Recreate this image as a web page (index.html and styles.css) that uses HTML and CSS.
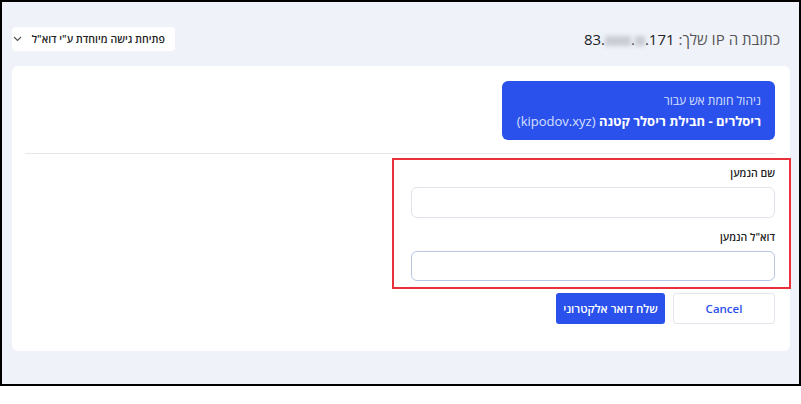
FILE: index.html
```html
<!DOCTYPE html>
<html lang="he" dir="rtl">
<head>
  <meta charset="UTF-8">
  <title>ניהול חומת אש</title>
  <link rel="stylesheet" href="styles.css">
</head>
<body>

  <div class="frame">

    <!-- Top bar: IP + special access dropdown -->
    <div class="topbar">
      <div class="ip-line">
        כתובת ה IP שלך:
        <span class="ip" dir="ltr">83.<span class="masked wide"></span>.<span class="masked"></span>.171</span>
      </div>
      <button class="dropdown">
        פתיחת גישה מיוחדת ע"י דוא"ל
        <svg width="9" height="6" viewBox="0 0 9 6"><path d="M1 1l3.5 3.5L8 1" fill="none" stroke="#555" stroke-width="1.2"/></svg>
      </button>
    </div>

    <div class="card">
      <div class="package-box">
        <div class="package-sub">ניהול חומת אש עבור</div>
        <div class="package-name">ריסלרים - חבילת ריסלר קטנה <span class="domain">(kipodov.xyz)</span></div>
      </div>

      <hr class="divider">

      <form class="send-form">
        <div class="fields">
          <div class="form-group">
            <label>שם הנמען</label>
            <input type="text">
          </div>
          <div class="form-group">
            <label>דוא"ל הנמען</label>
            <input type="email" class="active">
          </div>
        </div>
        <div class="actions">
          <button type="button" class="btn btn-cancel">Cancel</button>
          <button type="submit" class="btn btn-primary">שלח דואר אלקטרוני</button>
        </div>
      </form>
    </div>

  </div>

</body>
</html>
```

FILE: styles.css
```css
body {
  margin: 0;
  background: #fff;
  font-family: "Open Sans", "DejaVu Sans", sans-serif;
}
.frame {
  width: 801px;
  height: 386px;
  box-sizing: border-box;
  border: 2px solid #000;
  background-color: #eff2f9;
  padding: 25px 9px 0 10px;
}
.topbar {
  display: flex;
  justify-content: space-between;
  align-items: center;
  height: 24px;
  margin-bottom: 15px;
}
.ip-line {
  font-size: 15px;
  color: #555;
  margin-right: 10px;
}
.ip {
  color: #222;
}
.masked {
  display: inline-block;
  width: 10px;
  height: 10px;
  background: #c9ccd3;
  filter: blur(2px);
  vertical-align: middle;
}
.masked.wide {
  width: 26px;
}
.dropdown {
  display: flex;
  align-items: center;
  gap: 10px;
  height: 24px;
  width: 163px;
  padding: 0 10px 0 8px;
  background: #fff;
  border: none;
  border-radius: 4px;
  font-family: inherit;
  font-size: 10.5px;
  font-weight: 600;
  color: #222;
  white-space: nowrap;
  direction: rtl;
}
.dropdown svg {
  margin-right: auto;
  flex-shrink: 0;
}
.card {
  background: #fff;
  border-radius: 6px;
  padding: 15px 15px 27px 15px;
}
.package-box {
  width: 273px;
  height: 59px;
  box-sizing: border-box;
  background-color: #2b51ec;
  border-radius: 6px;
  padding: 11px 14px 0;
  color: #fff;
}
.package-sub {
  font-size: 12px;
  color: #d8e0ff;
  line-height: 18px;
}
.package-name {
  font-size: 13px;
  font-weight: 700;
  line-height: 22px;
}
.package-name .domain {
  font-weight: 400;
  color: #d8e0ff;
}
.divider {
  border: none;
  border-top: 1px solid #e6e8ec;
  margin: 13px 0 4px -2px;
}
.send-form {
  width: 364px;
}
.fields {
  position: relative;
  padding: 8px 0 8px;
}
/* highlight round the recipient fields */
.fields::after {
  content: "";
  position: absolute;
  top: 0;
  bottom: 0;
  right: -16px;
  left: -19px;
  border: 2px solid #e8313a;
}
.form-group {
  margin-bottom: 12px;
}
.form-group:last-child {
  margin-bottom: 0;
}
.form-group label {
  display: block;
  font-size: 10.5px;
  font-weight: 600;
  color: #222;
  margin: 0 0 7px;
  line-height: 14px;
}
.form-group input {
  display: block;
  width: 100%;
  height: 31px;
  box-sizing: border-box;
  border: 1px solid #dfe3ea;
  border-radius: 6px;
  outline: none;
}
.form-group input.active {
  height: 30px;
  border-color: #b6c6e3;
}
.actions {
  display: flex;
  gap: 8px;
  margin-top: 4px;
}
.btn {
  height: 31px;
  border-radius: 3px;
  font-family: inherit;
  font-size: 11.5px;
  font-weight: 600;
  cursor: pointer;
}
.btn-cancel {
  width: 102px;
  background: #fff;
  color: #2b51ec;
  border: 1px solid #e3e6ec;
}
.btn-primary {
  width: 109px;
  background-color: #2b51ec;
  color: #fff;
  border: none;
}
```
